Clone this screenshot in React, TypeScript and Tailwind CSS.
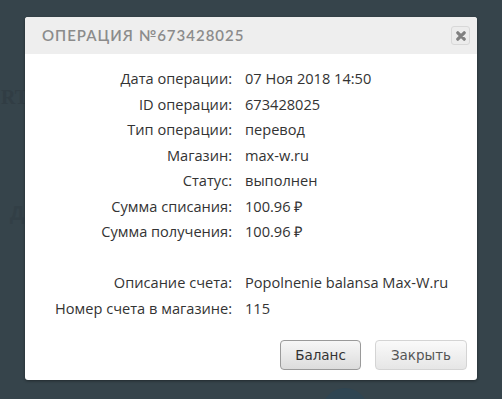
import React from 'react';

const rows: [string, string][] = [
    ['Дата операции:', '07 Ноя 2018 14:50'],
    ['ID операции:', '673428025'],
    ['Тип операции:', 'перевод'],
    ['Магазин:', 'max-w.ru'],
    ['Статус:', 'выполнен'],
    ['Сумма списания:', '100.96 ₽'],
    ['Сумма получения:', '100.96 ₽'],
    ['', ''],
    ['Описание счета:', 'Popolnenie balansa Max-W.ru'],
    ['Номер счета в магазине:', '115'],
];

export default function App() {
    return (
        <div className="relative h-[399px] w-[502px] overflow-hidden bg-[#36444b]">
            {/* faint page behind the overlay */}
            <div className="absolute left-[1px] top-[82px] text-[20px] font-bold text-[#313d44] [font-family:'Liberation_Serif',serif]">RT</div>
            <div className="absolute left-[10px] top-[198px] text-[20px] font-bold text-[#323f46] [font-family:'Liberation_Sans',sans-serif]">Д</div>
            <div className="absolute left-[322px] top-[388px] h-[46px] w-[46px] rounded-full bg-[#2f4552]"></div>

            <div className="relative ml-[25px] mt-[17px] w-[452px] overflow-hidden rounded-[3px] bg-white shadow-[0_1px_3px_rgba(0,0,0,0.4)] [font-family:'Open_Sans',sans-serif]">
                {/* header */}
                <div className="flex h-[37px] items-center justify-between bg-[#eeeeee] pl-[17px] pr-[7px]">
                    <span className="text-[15px] font-semibold uppercase tracking-[1px] text-[#8b8b8b] [font-family:'Lato',sans-serif]">Операция №673428025</span>
                    <button className="flex h-[19px] w-[19px] items-center justify-center rounded-[3px] border border-[#d8d8d8] bg-[#ececec]">
                        <svg width="10" height="10" viewBox="0 0 10 10">
                            <path d="M1.8 1.8 L8.2 8.2 M8.2 1.8 L1.8 8.2" stroke="#808080" strokeWidth="3.2" strokeLinecap="round" />
                        </svg>
                    </button>
                </div>

                {/* body */}
                <div className="grid grid-cols-[207px_1fr] gap-x-[13px] pt-[12px] text-[14.6px] leading-[25.5px] text-[#333333]">
                    {rows.map(([label, value], i) => (
                        <React.Fragment key={i}>
                            <div className="h-[25.5px] whitespace-nowrap text-right">{label}</div>
                            <div className="h-[25.5px] whitespace-nowrap">{value}</div>
                        </React.Fragment>
                    ))}
                </div>

                {/* footer */}
                <div className="flex justify-end gap-[14px] px-[10px] pb-[10px] pt-[19px] [font-family:'DejaVu_Sans',sans-serif]">
                    <button className="h-[30px] w-[81px] rounded-[4px] border border-[#9a9a9a] bg-gradient-to-b from-[#f7f7f7] to-[#dcdcdc] text-[13.5px] text-[#333333]">Баланс</button>
                    <button className="h-[30px] w-[92px] rounded-[4px] border border-[#d4d4d4] bg-gradient-to-b from-[#fafafa] to-[#e6e6e6] text-[13.5px] text-[#555555]">Закрыть</button>
                </div>
            </div>
        </div>
    );
}
